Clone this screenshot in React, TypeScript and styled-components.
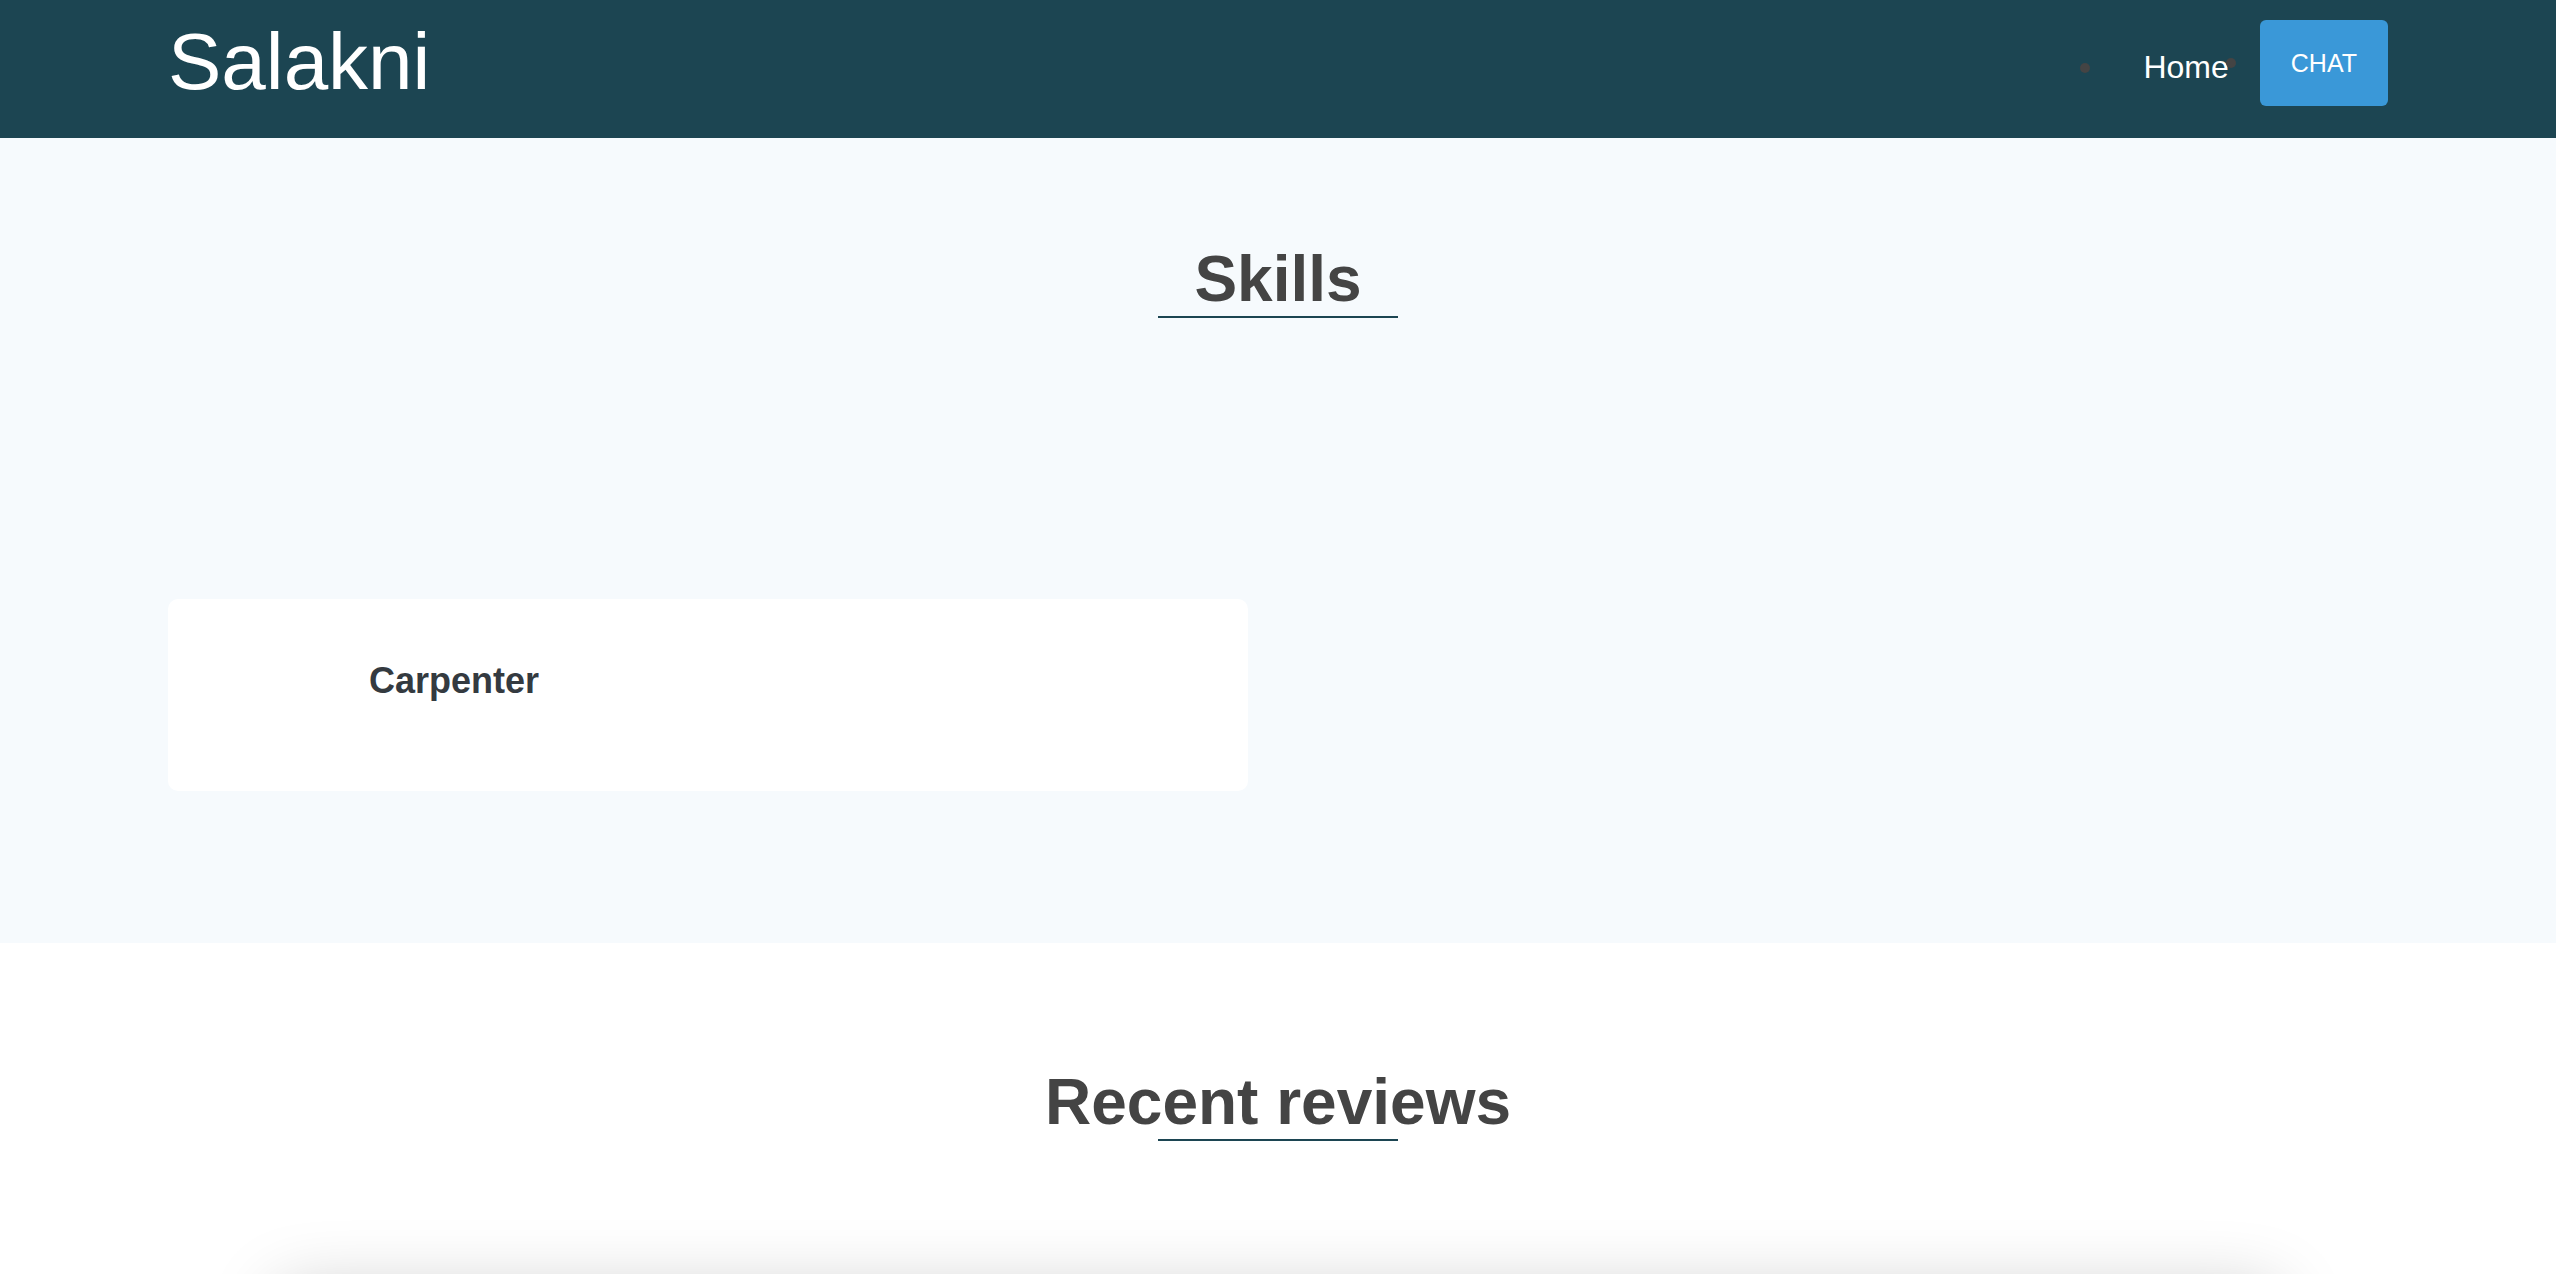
import styled, { createGlobalStyle } from "styled-components";

const GlobalStyle = createGlobalStyle`
  * {
    box-sizing: border-box;
  }

  body {
    margin: 0;
    font-family: "Liberation Sans", Arial, Helvetica, sans-serif;
    background: #ffffff;
    color: #444444;
  }
`;

const Page = styled.div`
  min-height: 100vh;
  display: flex;
  flex-direction: column;
`;

const Container = styled.div`
  width: 2220px;
  margin: 0 auto;
`;

const Header = styled.header`
  background: #1c4552;
  height: 138px;
`;

const HeaderInner = styled(Container)`
  display: flex;
  justify-content: space-between;
  align-items: flex-start;
`;

const Logo = styled.h1`
  margin: 16px 0 0;
  font-size: 80px;
  font-weight: 400;
  line-height: normal;
  color: #ffffff;
`;

const Nav = styled.ul`
  display: flex;
  align-items: flex-start;
  list-style: none;
  margin: 20px 0 0;
  padding: 0;
`;

const Bullet = styled.span<{ top: number; before: number; after: number }>`
  display: block;
  flex: none;
  width: 10px;
  height: 10px;
  border-radius: 50%;
  background: #444444;
  margin-top: ${(p) => p.top}px;
  margin-left: ${(p) => p.before}px;
  margin-right: ${(p) => p.after}px;
`;

const NavLink = styled.a`
  display: block;
  margin-top: 29px;
  font-size: 32px;
  line-height: normal;
  color: #ffffff;
  text-decoration: none;
`;

const ChatButton = styled.button`
  display: block;
  background: #3a98d8;
  color: #ffffff;
  border: none;
  border-radius: 6px;
  font-family: inherit;
  font-size: 25px;
  line-height: normal;
  padding: 29px 31px 28px;
  cursor: pointer;
`;

const Section = styled.section<{ tint?: boolean; padTop: number }>`
  background: ${(p) => (p.tint ? "#f6fafd" : "#ffffff")};
  padding-top: ${(p) => p.padTop}px;
`;

const SectionTitle = styled.h2`
  margin: 0;
  font-size: 64px;
  font-weight: 700;
  line-height: normal;
  text-align: center;
  color: #444444;

  &::after {
    content: "";
    display: block;
    width: 240px;
    height: 2px;
    margin: 0 auto;
    background: #1c4552;
  }
`;

const SkillGrid = styled(Container)`
  display: grid;
  grid-template-columns: 1fr 1fr;
  gap: 60px;
  padding: 281px 0 152px;
`;

const SkillCard = styled.div`
  background: #ffffff;
  border-radius: 10px;
  height: 192px;
  padding: 61px 0 0 201px;
`;

const SkillName = styled.h3`
  margin: 0;
  font-size: 36px;
  font-weight: 700;
  line-height: normal;
  color: #343a40;
`;

const ReviewCard = styled.div`
  width: 2000px;
  height: 320px;
  margin: 150px auto 60px;
  background: #ffffff;
  border-radius: 10px;
  box-shadow: 0 0 70px rgba(0, 0, 0, 0.22);
`;

const skills = ["Carpenter"];

export default function App() {
  return (
    <Page>
      <GlobalStyle />
      <Header>
        <HeaderInner>
          <Logo>Salakni</Logo>
          <Nav>
            <Bullet top={43} before={0} after={53} />
            <li>
              <NavLink href="#">Home</NavLink>
            </li>
            <Bullet top={38} before={-3} after={24} />
            <li>
              <ChatButton>CHAT</ChatButton>
            </li>
          </Nav>
        </HeaderInner>
      </Header>

      <Section tint padTop={104}>
        <SectionTitle>Skills</SectionTitle>
        <SkillGrid>
          {skills.map((skill) => (
            <SkillCard key={skill}>
              <SkillName>{skill}</SkillName>
            </SkillCard>
          ))}
        </SkillGrid>
      </Section>

      <Section padTop={122}>
        <SectionTitle>Recent reviews</SectionTitle>
        <ReviewCard />
      </Section>
    </Page>
  );
}
